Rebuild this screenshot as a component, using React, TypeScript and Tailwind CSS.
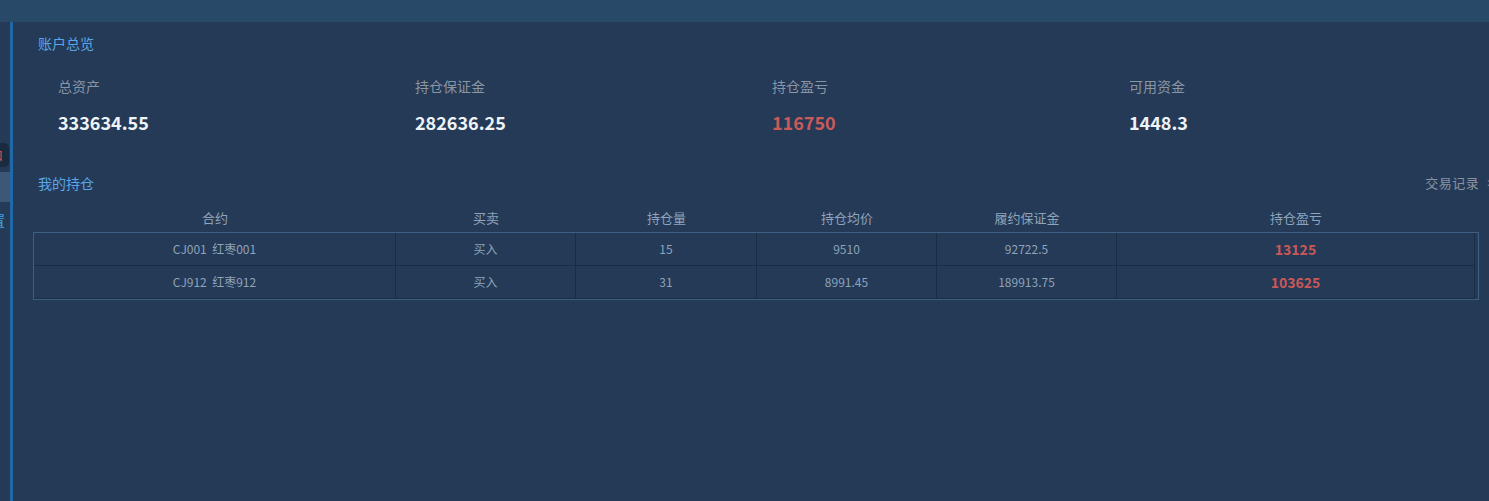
import React from "react";

const cols = [362, 180, 181, 180, 180, 358];
const headers = ["合约", "买卖", "持仓量", "持仓均价", "履约保证金", "持仓盈亏"];
const rows = [
  ["CJ001  红枣001", "买入", "15", "9510", "92722.5", "13125"],
  ["CJ912  红枣912", "买入", "31", "8991.45", "189913.75", "103625"],
];

const stats = [
  { label: "总资产", value: "333634.55", red: false },
  { label: "持仓保证金", value: "282636.25", red: false },
  { label: "持仓盈亏", value: "116750", red: true },
  { label: "可用资金", value: "1448.3", red: false },
];

export default function App() {
  return (
    <div
      className="w-[1489px] h-[501px] overflow-hidden bg-[#243a57] flex flex-col"
      style={{ fontFamily: '"Microsoft YaHei", "Noto Sans CJK SC", "Noto Sans", sans-serif' }}
    >
      <div className="h-[22px] shrink-0 bg-[#284968]" />
      <div className="flex flex-1 min-h-0">
        {/* clipped sidebar */}
        <div className="w-[10px] shrink-0 overflow-hidden">
          <div className="w-[100px] ml-[-90px] pt-[121px] flex flex-col">
            <div className="h-[24px] mr-[1px] rounded-[5px] bg-[#1a2a3f] flex items-center justify-end pr-[6px] text-[13px] text-white whitespace-nowrap">
              账户<span className="text-[#e05050]">口</span>
            </div>
            <div className="h-[30px] mt-[5px] bg-[#3d5877]" />
            <div className="mt-[9px] h-[18px] flex items-center justify-end pr-[5px] text-[14px] leading-[18px] text-[#3fa2ea] whitespace-nowrap">
              系统设置
            </div>
          </div>
        </div>
        <div className="w-[3px] shrink-0 bg-[#1f6aa6]" />
        <main className="w-[1502px] shrink-0 pl-[20px]">
          <div className="pl-[5px] pt-[13px] text-[14px] leading-[16px] text-[#5aa6e6]">账户总览</div>
          <div className="flex pl-[25px] mt-[27px]">
            {stats.map((s) => (
              <div key={s.label} className="w-[357px] shrink-0 flex flex-col">
                <div className="text-[14px] leading-[16px] text-[#8a95a4]">{s.label}</div>
                <div
                  className={`mt-[18px] text-[18px] leading-[20px] font-bold ${
                    s.red ? "text-[#c85a5a]" : "text-[#eef3f8]"
                  }`}
                >
                  {s.value}
                </div>
              </div>
            ))}
          </div>
          <div className="w-[1462px] flex items-center justify-between mt-[43px] pl-[5px] leading-[16px]">
            <span className="text-[14px] text-[#5aa6e6]">我的持仓</span>
            <span className="text-[13px] tracking-[0.5px] text-[#8a95a4] whitespace-nowrap">
              交易记录<span className="ml-[8px]">&gt;</span>
            </span>
          </div>
          <div className="flex h-[28px] mt-[13px] pl-[1px]">
            {headers.map((h, i) => (
              <div
                key={h}
                style={{ width: cols[i] }}
                className="shrink-0 flex items-center justify-center text-[13px] text-[#8fa3b9]"
              >
                {h}
              </div>
            ))}
          </div>
          <div className="w-[1446px] border border-[#3d6082]">
            {rows.map((r, ri) => (
              <div key={ri} className="flex h-[33px]">
                {r.map((c, ci) => (
                  <div
                    key={ci}
                    style={{ width: cols[ci] }}
                    className={`shrink-0 flex items-center justify-center border-r border-b border-[#1b2d46] whitespace-pre ${
                      ci === 5
                        ? "text-[14px] font-bold text-[#c95858]"
                        : "text-[12px] text-[#8ea3ba]"
                    }`}
                  >
                    {c}
                  </div>
                ))}
              </div>
            ))}
          </div>
        </main>
      </div>
    </div>
  );
}
